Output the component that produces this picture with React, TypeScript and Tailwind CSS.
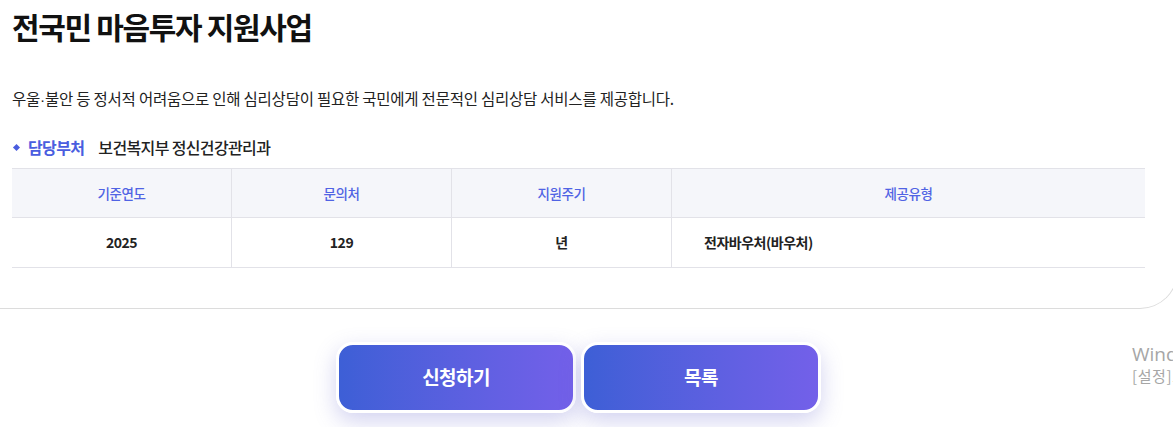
const info = [
    { label: '기준연도', value: '2025', align: 'center' },
    { label: '문의처', value: '129', align: 'center' },
    { label: '지원주기', value: '년', align: 'center' },
    { label: '제공유형', value: '전자바우처(바우처)', align: 'left' },
];

export default function App() {
    return (
        <div
            className="relative w-[1173px] h-[427px] overflow-hidden bg-white text-[#111]"
            style={{ fontFamily: '"Noto Sans CJK KR", "Noto Sans", sans-serif' }}
        >
            {/* Detail card */}
            <div className="w-[1178px] border-b border-r border-[#dcdcdc] rounded-br-[38px] pl-3 pr-8 pt-[5px] pb-10">
                <h1 className="text-[30px] font-bold tracking-[-0.045em] leading-[42px]">전국민 마음투자 지원사업</h1>

                <p className="mt-[40px] text-[15.5px] tracking-[-0.015em] leading-[22px] text-[#222]">
                    우울<span style={{ fontFamily: '"Liberation Sans", sans-serif' }}>·</span>불안 등 정서적 어려움으로 인해 심리상담이 필요한 국민에게 전문적인 심리상담 서비스를 제공합니다.
                </p>

                <div className="mt-[25px] flex items-center text-[16px] tracking-[-0.04em] leading-[22px]">
                    <span className="ml-[2px] w-[5px] h-[5px] rotate-45 bg-[#4a5ddf]" />
                    <span className="ml-[9px] font-bold text-[#4a5ddf]">담당부처</span>
                    <span className="ml-[14px] font-medium text-[#222]">보건복지부 정신건강관리과</span>
                </div>

                <div className="mt-[10px] grid grid-cols-[219px_220px_220px_1fr] border-t border-[#e2e2e8] tracking-[-0.03em]">
                    {info.map((c, i) => (
                        <div
                            key={c.label}
                            className={`h-[49px] flex items-center justify-center bg-[#f5f6fa] border-b border-[#e2e2e8] text-[13.5px] font-medium text-[#5063e4] ${i > 0 ? 'border-l' : ''}`}
                        >
                            {c.label}
                        </div>
                    ))}
                    {info.map((c, i) => (
                        <div
                            key={c.value}
                            className={`h-[50px] flex items-center border-b border-[#e2e2e8] text-[14px] font-semibold text-[#222] ${i > 0 ? 'border-l' : ''} ${c.align === 'left' ? 'justify-start pl-8' : 'justify-center'}`}
                        >
                            {c.value}
                        </div>
                    ))}
                </div>
            </div>

            {/* Buttons */}
            <div className="mt-[33px] flex justify-center gap-[5px] pr-[16px]">
                <button className="w-[240px] h-[71px] rounded-[17px] border-[3px] border-white bg-gradient-to-r from-[#3d5fd6] to-[#7360e9] text-white text-[19px] font-bold tracking-[-0.03em] shadow-[0_8px_22px_rgba(95,95,200,0.28)]">
                    신청하기
                </button>
                <button className="w-[240px] h-[71px] rounded-[17px] border-[3px] border-white bg-gradient-to-r from-[#3d5fd6] to-[#7360e9] text-white text-[19px] font-bold tracking-[-0.03em] shadow-[0_8px_22px_rgba(95,95,200,0.28)]">
                    목록
                </button>
            </div>

            {/* Windows activation watermark */}
            <div className="absolute left-[1132px] top-[343px] whitespace-nowrap text-[#a6a6a6] leading-tight">
                <div className="text-[19px]" style={{ fontFamily: '"Open Sans", "Noto Sans CJK KR", sans-serif' }}>Windows 정품 인증</div>
                <div className="text-[15px] tracking-[0.04em]">[설정]으로 이동하여 Windows를 정품 인증합니다.</div>
            </div>
        </div>
    );
}
